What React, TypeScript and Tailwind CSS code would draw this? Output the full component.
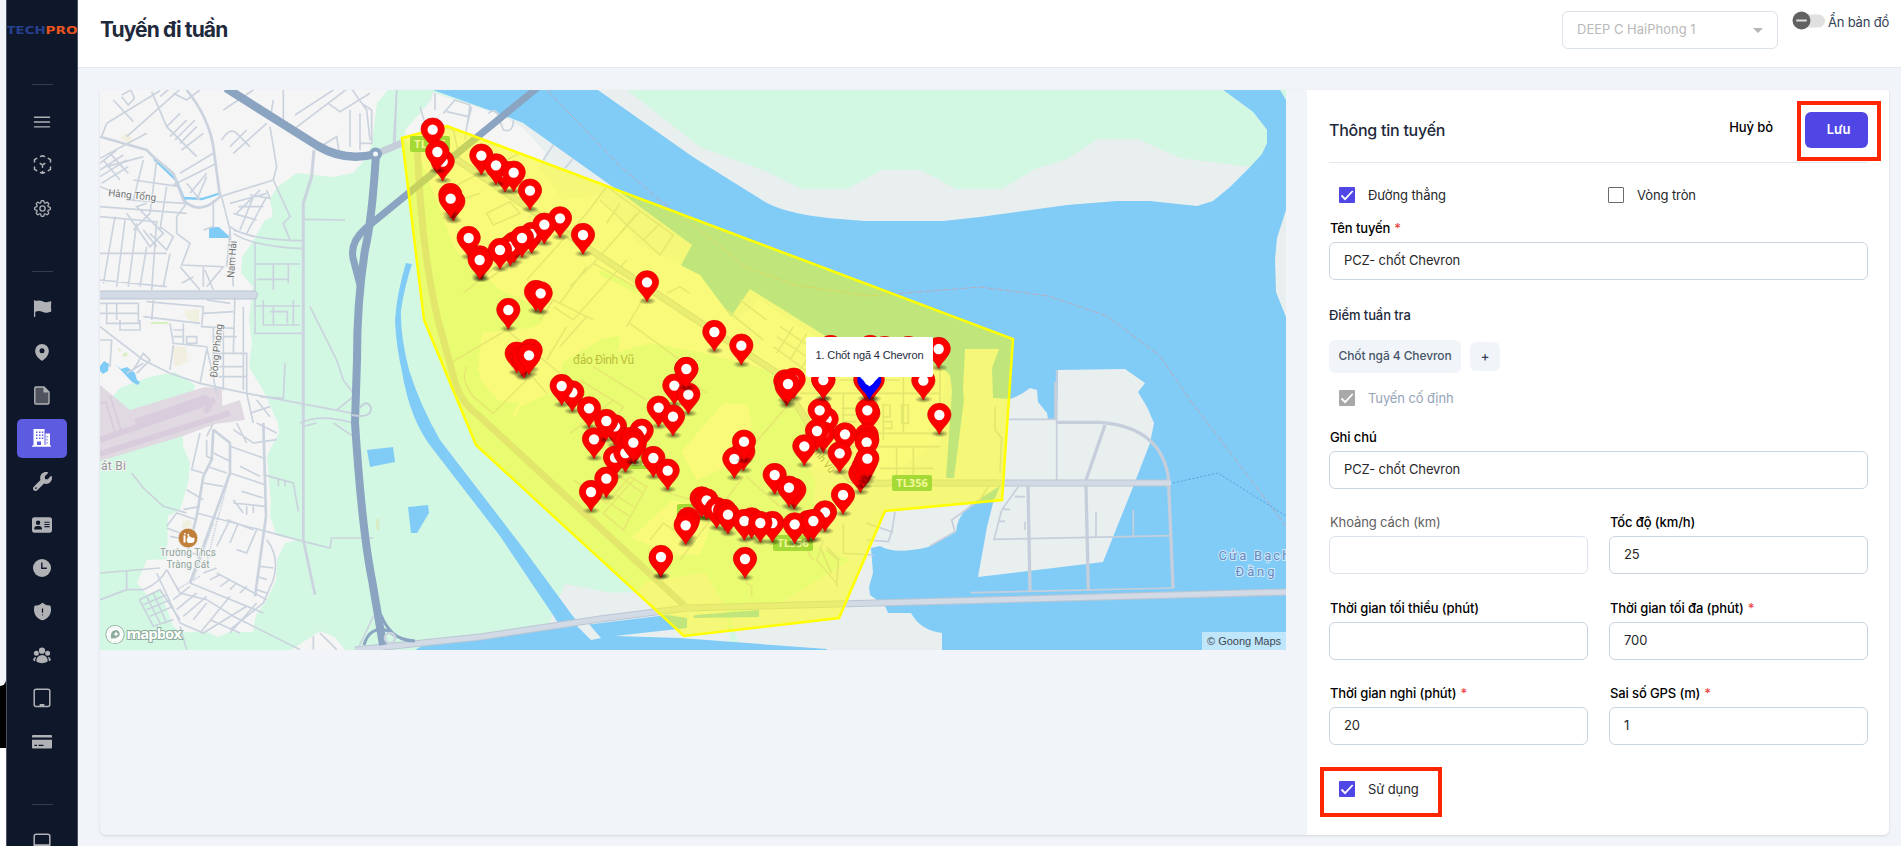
import type { ReactNode } from "react";
import { HiMapPin, HiShieldExclamation, HiUserGroup, HiFlag, HiBars3, HiOutlineCog8Tooth } from "react-icons/hi2";
import { FaWrench, FaAddressCard } from "react-icons/fa6";

type Point = [number, number];

/* ---------- Sidebar ---------- */

const FileIcon = () => (
  <svg width="16" height="19" viewBox="0 0 16 19">
    <path d="M2 1h8l5 5v10.500a1.500 1.500 0 0 1-1.500 1.500h-11.500a1.200 1.200 0 0 1-1.200-1.200v-14.500a1.300 1.300 0 0 1 1.200-1.300z" fill="#4f535e" stroke="#b1b2b6" strokeWidth="1.400" />
    <path d="M9.500 1l5.500 5.500h-5.500z" fill="#b1b2b6" />
  </svg>
);

const BuildingIcon = () => (
  <svg width="20" height="18" viewBox="0 0 20 18">
    <path fill="#fff" fillRule="evenodd" d="M1.500 0h11v16h1v-11.500h4.500v12h1v1.300h-19v-1.300h1.500zM4 2.500v1.500h1.500v-1.500zm3 0v1.500h1.500v-1.500zm2.800 0v1.500h1.500v-1.500zm-5.800 3v1.500h1.500v-1.500zm3 0v1.500h1.500v-1.500zm2.800 0v1.500h1.500v-1.500zm-5.800 3v1.500h1.500v-1.500zm3 0v1.500h1.500v-1.500zm2.800 0v1.500h1.500v-1.500zm-4.800 4v3.500h4v-3.500zm9.500-5.500v1.500h1v-1.500zm0 3v1.500h1v-1.500zm0 3v1.500h1v-1.500z" />
  </svg>
);

const ClockIcon = () => (
  <svg width="18" height="18" viewBox="0 0 18 18">
    <circle cx="9" cy="9" r="9" fill="#b1b2b6" />
    <path d="M8.800 3.500v5.700h5" fill="none" stroke="#0f172a" strokeWidth="1.400" />
  </svg>
);

const TabletIcon = () => (
  <svg width="18" height="20" viewBox="0 0 18 20">
    <rect x="1.200" y="1.200" width="15.600" height="17.400" rx="2" fill="none" stroke="#b1b2b6" strokeWidth="1.500" />
    <rect x="6.500" y="16" width="5" height="2" rx=".8" fill="#b1b2b6" />
  </svg>
);

const LaptopIcon = () => (
  <svg width="18" height="16" viewBox="0 0 18 16">
    <rect x="1.200" y="1.200" width="15.600" height="14" rx="2" fill="none" stroke="#b1b2b6" strokeWidth="1.500" />
    <path d="M1 11.200h16v4h-16z" fill="#b1b2b6" />
  </svg>
);

const CardIcon = () => (
  <svg width="20" height="14" viewBox="0 0 20 14">
    <path fill="#b1b2b6" fillRule="evenodd" d="M1 0h18a1 1 0 0 1 1 1v1.500h-20v-1.500a1 1 0 0 1 1-1zM0 4.800h20v7.700a1 1 0 0 1-1 1h-18a1 1 0 0 1-1-1zM2.500 9.700v1.200h2.500v-1.200zm4 0v1.200h5v-1.200z" />
  </svg>
);

const ScanIcon = () => (
  <svg width="19" height="19" viewBox="0 0 19 19" fill="none" stroke="#b1b2b6" strokeWidth="1.500" strokeLinecap="round" strokeLinejoin="round">
    <path d="M7.500 1.500l2-.8 2 .8M3.700 3.400l-2.200 1.300v2.300M15.300 3.400l2.200 1.300v2.300M1.500 12v2.300l2.200 1.300M17.500 12v2.300l-2.200 1.300M7.500 17.500l2 .8 2-.8M9.500 16.500v1.700M7.200 8.500l2.300 1.300 2.300-1.300M9.500 9.800v2.400" />
  </svg>
);

const NavItem = ({ active, children }: { active?: boolean; children: ReactNode }) => (
  <div className="flex h-[43.3px] w-full shrink-0 items-center justify-center">
    <div className={active ? "flex h-[39px] w-[50px] items-center justify-center rounded-[5px] bg-[#5d5be0]" : "flex items-center justify-center text-[#b1b2b6]"}>
      {children}
    </div>
  </div>
);

const Divider = () => <div className="h-px w-[21px] shrink-0 bg-[#343c4d]" />;

const Sidebar = () => (
  <aside className="flex h-full w-[72px] shrink-0 flex-col items-center overflow-hidden border-x border-[#4a5160] bg-[#0f172a]">
    <div className="flex h-[84px] w-full shrink-0 items-start pt-[25px]">
      <svg width="70" height="11" viewBox="0 0 70 11" className="font-['DejaVu_Sans'] text-[11px] font-bold">
        <text x="-0.500" y="9" textLength="39" lengthAdjust="spacingAndGlyphs" fill="#26418f">TECH</text>
        <text x="38.500" y="9" textLength="32" lengthAdjust="spacingAndGlyphs" fill="#e8551f">PRO</text>
      </svg>
    </div>
    <Divider />
    <div className="mt-[15px] flex w-full flex-col">
      <NavItem><HiBars3 className="h-[22px] w-[22px]" /></NavItem>
      <NavItem><ScanIcon /></NavItem>
      <NavItem><HiOutlineCog8Tooth className="h-[21px] w-[21px]" /></NavItem>
    </div>
    <div className="mt-[41px]"><Divider /></div>
    <div className="mt-[15px] flex w-full flex-col">
      <NavItem><HiFlag className="h-[21px] w-[21px]" /></NavItem>
      <NavItem><HiMapPin className="h-[20px] w-[20px]" /></NavItem>
      <NavItem><FileIcon /></NavItem>
      <NavItem active><BuildingIcon /></NavItem>
      <NavItem><FaWrench className="h-[19px] w-[19px]" /></NavItem>
      <NavItem><FaAddressCard className="h-[18px] w-[20px]" /></NavItem>
      <NavItem><ClockIcon /></NavItem>
      <NavItem><HiShieldExclamation className="h-[21px] w-[21px]" /></NavItem>
      <NavItem><HiUserGroup className="h-[20px] w-[20px]" /></NavItem>
      <NavItem><TabletIcon /></NavItem>
      <NavItem><CardIcon /></NavItem>
    </div>
    <div className="mt-[41px]"><Divider /></div>
    <div className="mt-[28px]"><LaptopIcon /></div>
  </aside>
);

/* ---------- Map ---------- */

const zone = "402,138 447,126 1013,339 1002,500 885,511 839,618 684,636 476,445 424,320";

const westPins: Point[] = [
  [158, 149], [188, 245], [172, 216], [304, 227], [375, 278], [348, 256], [401, 278], [450, 332],
  [220, 365], [211, 345], [212, 356], [266, 474], [304, 540], [299, 532], [299, 540], [540, 415], [455, 462],
  [403, 490], [391, 500], [493, 434], [426, 474], [360, 510], [609, 465], [801, 607], [468, 636],
  [482, 640], [385, 690], [410, 821], [452, 812], [426, 830], [432, 836], [447, 826], [1003, 756],
  [1084, 797], [883, 917], [919, 867],
];

const southPins: Point[] = [
  [577, 97], [545, 78], [627, 145], [642, 238], [705, 199], [679, 183], [785, 212], [740, 238],
  [758, 236], [705, 293], [736, 279], [764, 254], [760, 248], [820, 294], [863, 332], [633, 396], [679, 356],
  [925, 104], [836, 143], [879, 170], [1090, 275], [1063, 297], [1092, 245], [1216, 64],
  [1241, 59], [1220, 80], [1224, 72], [1330, 60], [1340, 178], [1330, 220], [1319, 151], [1311, 213], [1273, 259],
  [1184, 345], [1243, 390], [1227, 383], [965, 415], [980, 421], [1010, 447], [1035, 453], [1044, 464],
  [925, 477], [922, 487], [917, 496], [842, 594], [843, 591], [1095, 597], [1115, 478], [1093, 483], [1177, 489], [1141, 489],
  [1335, 457], [1285, 486], [1244, 493], [1300, 483],
];

const eastPins: Point[] = [
  [70, 60], [196, 60], [218, 60], [209, 70], [205, 160], [202, 151], [200, 226], [202, 240], [200, 247], [181, 340],
  [190, 322], [197, 308], [202, 296], [135, 223], [119, 280], [370, 62], [418, 165], [129, 405],
  [416, -33], [92, -39], [211, -39], [254, -36], [325, -36],
];

const Pin = ({ x, y, color = "#fe0000", edge = "#d80000" }: { x: number; y: number; color?: string; edge?: string }) => (
  <g transform={`translate(${x} ${y})`}>
    <ellipse cx="1" cy="56" rx="27" ry="11" fill="url(#pinShadow)" />
    <path d="M0 58C-6 40-35 22-35-1A35 34 0 0 1 35-1C35 22 6 40 0 58Z" fill={color} stroke={edge} strokeWidth="2" />
    <circle r="15.500" fill="#fff" />
  </g>
);

const Badge = ({ x, y, label }: { x: number; y: number; label: string }) => (
  <g>
    <rect x={x} y={y} width="40" height="16" rx="2" fill="#a4d936" />
    <text x={x + 20} y={y + 12} textAnchor="middle" className="font-['Open_Sans'] text-[11px] font-bold" fill="#f5f99b">{label}</text>
  </g>
);

const GuardMap = () => (
  <svg width="1186" height="560" viewBox="100 90 1186 560" className="block shrink-0">
    <defs>
      <radialGradient id="pinShadow">
        <stop offset="0" stopColor="#000" stopOpacity=".55" />
        <stop offset="1" stopColor="#000" stopOpacity="0" />
      </radialGradient>
    </defs>
    <rect x="100" y="90" width="1186" height="560" fill="#d2f7e2" />

    {/* settled areas */}
    <path fill="#f5f5f5" d="M100 90H388L377 103 372 143 368 156 353 173 333 177 297 173 277 187 270 200 273 217 265 220 252 243 242 257 241 273 253 287 249 320 252 343 249 367 263 390 278 423 279 432 267 456 271 503 270 516 277 536 297 540 285 543 277 560 276 580 267 600 256 615 253 632H230L218 637 207 632H180L173 626 160 590 147 595 137 583 147 560 167 559 168 516 180 510 188 483 190 463 183 446V436L195 385 175 372 150 377 120 388 113 396 100 400Z" />
    <path fill="#f5f5f5" d="M291 650L320 631 335 637 345 650Z" />
    <path fill="#e0d9e1" d="M100 385L112 395 130 410 205 387 222 388V406L240 400 245 420 215 424 183 436 100 461Z" />
    <path fill="none" stroke="#d9cddd" strokeWidth="6" d="M100 454L230 413M135 422L205 398Q215 402 205 412M100 440L215 400" />
    <path fill="none" stroke="#d9cddd" strokeWidth="2" d="M100 404L106 402 116 436M110 396L122 433" />
    <path fill="#f1efe0" d="M120 138l6-5 7 6-3 5zM185 310l14-1v14h-6l-8-7zM172 346l14 1 2 15-14 5zM182 522l8-3 2 7-10 3z" />
    <path fill="#d8f0c0" d="M151 322h18l-1 2h-17zM117 347l4 3-1 2zM122 355l4-3 2 2-3 3z" />
    <path fill="#d9ecc6" d="M376 519l3 0 1 11-2 1-2-4zM393 525l14-2v6l-14 1zM399 511l6-2v2l-6 2z" />

    {/* sea and rivers */}
    <path fill="#81ccf7" d="M433 90H1286V650H870L780 400 700 297 600 200 523 123 497 113Z" />
    <path fill="#e9efef" d="M598 90L693 157 767 203Q790 215 840 219L865 221H943L980 217 1067 205 1117 201H1150L1197 206 1213 201 1230 187 1250 167 1267 143V130L1253 112 1223 90Z" />
    <path fill="#d2f7e2" d="M627 90L700 147 763 170 801 189H847L882 170H921L956 189H1002L1035 169 1067 159 1098 139H1138L1180 158 1250 167 1262 154 1267 143V130L1253 112 1223 90Z" />
    <path fill="#d2f7e2" d="M1280 90h6v10z" />
    <path fill="#e9efef" d="M1286 210L1277 238 1275 260 1276 292 1286 317Z" />

    {/* island */}
    <path fill="#e9efef" d="M433 92L497 113 523 123 613 187 692 245 680 267Q682 283 697 297L730 318 750 289 827 337 880 362 940 366 950 375 952 390 946 478H954L964 400 963 390 965 349H999L992 368 993 398 1010 399Q1020 396 1030 388L1037 390 1038 402 1047 413 1048 419H1057L1058 370 1125 369 1145 383 1138 392 1147 407 1154 423 1150 443 1133 487 1113 537 1103 562 978 577 987 527 993 503 1000 486 973 503Q957 515 956 532L928 547Q895 555 880 546L871 548 873 573 869 587 870 595 877 600 885 606 888 613H911Q920 630 942 633V650H538L565 584 500 400 402 138 430 100Z" />
    <path fill="#f5f5f5" d="M433 93L500 115 523 128 545 152 540 168 562 200 600 195 640 245 700 275 735 322 760 300 820 340 860 365 930 367 944 376 940 440 905 465 900 480 850 480 800 460 770 380 650 360 530 400 470 400 420 250 405 130 432 100Z" />
    <path fill="#d2f7e2" d="M403 138L418 152 455 250 500 290 545 310Q545 325 530 328L482 333 478 370Q500 410 530 400L560 385 563 362 600 340 620 335 618 352 650 343 700 352 775 372 812 420 802 455 815 480 812 545 850 560 785 600 730 618 741 650 731 650 727 610 705 572 645 582 637 592 613 593 565 584 538 623 380 640 380 200Z" />
    <path fill="#d2f7e2" d="M600 270L612 275 640 290 635 292 600 275z" />
    <path fill="#f5f5f5" d="M482 332L545 355 560 372 555 390 520 407 516 417 512 414 520 403 498 400 480 380zM723 403L748 405 752 425 738 462 697 480 681 452zM631 538L672 500 690 505 715 515 700 555 665 555 650 545z" />
    <path fill="#81ccf7" d="M427 643L560 628 667 615 687 618V628L615 636 680 638 827 649V650H415ZM695 615L759 610V617L693 618Z" />
    <path fill="#81ccf7" d="M406 263Q397 292 395 320 396 345 402 372 410 420 432 448L500 536 553 615 575 650H602L572 615 520 544 440 440Q420 405 409 370 400 335 401 310 405 285 412 264Z" />
    <path fill="#81ccf7" d="M367 450l26-3 2 15-25 5zM408 507l20-2 1 8-12 20h-6zM209 227h10l12 11h-22zM100 366l4-5 5 3-1 7-5 3-3-3zM116 365l5 4 6-2 8 6 2 7 3 2-2 3-6-3z" />
    <path fill="none" stroke="#81ccf7" strokeWidth="2.300" d="M154 159L176 180 185 201M184 198L202 199 221 193" />
    <path fill="#e9efef" d="M575 624l14 0 12 14-10 2z" />

    {/* minor streets */}
    <g fill="none" stroke="#cbd3de" strokeWidth="5" transform="scale(.33333)">
      <path d="M300 410L440 450 460 470 520 520 550 600Q600 650 660 590L640 440Q625 350 560 270" strokeWidth="8" />
      <path d="M305 410L320 370 480 272M340 300L400 365M365 290l20 25 18-20-10-25-28 15M480 290l30-25M455 275L500 380 590 470M540 268L380 410M300 475L440 400M320 500L430 470M600 270L560 300 520 280M510 410l50-50M525 420l60-60M540 430l50-50M500 380l40-40M610 400L545 450M520 555L650 490M540 520L640 460" />
      <path d="M300 490L350 450M300 510L370 465M300 530L380 480M305 550L385 500M330 460L385 520M310 480L360 540M300 560L340 575" />
      <path d="M430 480L400 600M470 480L450 640M500 560L480 690M400 540L540 560M380 600L560 610M560 610L530 650 530 700 570 730 545 795 670 800 620 860" />
      <path d="M640 600V680L610 690M665 590L690 690 700 860M660 590L820 540M690 610L800 580M710 640L780 570M720 690L760 590M740 700L800 590M700 640L770 660M715 620L790 620M700 690L760 710M800 570l10 25-60-10M600 600l-40-50M570 580l50-60M590 600l30-70" />
      <path d="M300 650L470 665 455 870M345 650L310 850M375 660L350 860M410 670L385 860M440 740L420 860M510 760L490 860M300 760H500M300 840L500 860M300 620L560 640M380 640L450 740 490 700 410 620 440 610M450 700l50 50 20-40-40-30M430 690l40 50M400 690l50-50" />
      <path d="M540 800L600 870M545 850l35-20M610 860V800M690 690L680 800M705 880L700 1060 740 1060V1180M730 920V1170M300 910H415V970H320V910M300 940H415M350 910V960M460 900L455 960M300 980L430 1080 510 1120 600 1150 740 1180 1060 1240M430 950L600 970M360 960V990H420V960M510 970L520 1030 620 1040 650 1180M550 970V1035M520 990H550M520 1010H550M440 905L610 920 605 980 700 985M560 1010h30v20h-30zM620 900L690 910M610 940L700 935M640 980V1100M670 990V1170M640 1010H710M640 1060H700M640 1100H730M650 1130H740M600 1150L620 1050M510 1110L520 1035M640 870l-25-60M300 1020H335L330 1100M400 1110L430 1060 450 1080 410 1120M380 1120L430 1090" />
      <path d="M850 268V360M810 360L820 300M885 345L1000 270M885 385L1050 260 1100 330 1110 420M985 310L1020 335 1110 280M1050 330V440M1080 340V450M1085 310l30 20V430h-35M670 330L760 270M665 420Q690 380 710 400L750 440M690 440L740 390M700 460L800 370M960 440L1010 410 1018 460M810 380L830 500 820 540 870 650 850 670 870 720M1190 270L1180 440" />
      <path d="M690 680Q740 720 910 722M700 700Q760 740 910 746M765 730V1000H910M765 792H900M820 792V870M865 792V850M770 838H865M765 918H900M790 900V975H900M810 935H862V970M880 900V975M820 918V975M930 920L1010 1080 1030 1140 1060 1180M915 658L1035 660M1010 1230L1060 1190M740 1180L760 1269M780 1190L850 1195 855 1090M750 1240l60-20M770 1200l40 50M900 1269Q960 1240 1060 1269" />
      <path d="M942 450L935 530 910 610V1269" strokeWidth="9" />
    </g>
    <g fill="none" stroke="#cbd3de" strokeWidth="5" transform="translate(0 423) scale(.33333)">
      <path d="M910 0V350L945 515M790 0L798 280 765 520M640 20L690 60V150L570 480M640 20L635 110 610 160 590 280 560 400" strokeWidth="8" />
      <path d="M590 270L910 355M690 150L795 185M650 450L800 530M570 480L790 570M500 440L540 510 620 530 700 580 900 680M800 350Q840 400 820 470L790 540 690 620M540 600L610 630 740 550M470 450L540 600M600 630L690 520M690 630L770 540M630 590L720 630M430 500Q480 480 500 440M300 530L380 500H430M300 450L480 435M380 445V500M300 530L370 505" />
      <path d="M600 30L575 140 610 150M620 50V100L640 110M690 70L790 105M700 20L760 60 830 50M710 0L740 60M770 0L830 30M640 90L690 115M620 130L680 150M610 180L670 190M560 200L610 230M550 260L600 250M500 310L530 270 590 290M500 315L540 330M510 340L560 350M570 390L640 400M690 290L650 370M715 300L690 360M680 290L760 320M770 320L740 390L710 380M720 130l60 30M700 240L795 250M725 205L790 225M700 230l30 40M740 250v25M760 250v20M790 155L880 180 895 265M835 190V170M855 190V175M395 150L430 195 490 250 560 270" />
      <path d="M418 530L480 500 540 590M418 530L460 610 520 590M430 545L500 515M440 560L510 530M450 580L520 550M440 520L480 600M460 510L500 600M520 530L570 490M530 560L590 510M550 580L620 520M580 590L620 540M610 450l40-15M630 470l30-15M660 490l30-20M690 500l20-20M720 510l20-20M770 460l30 10M780 430l40 5M770 500l30 10M1120 345H995L990 375L910 355M640 0L620 40M540 610L560 680M960 630L1010 680M940 640V680M1120 580L1075 675M910 10L950 0M1000 0L1060 40" />
      <path d="M620 420L650 300 690 150M580 470L640 300M530 500L600 460" strokeDasharray="4 3" />
    </g>
    <g fill="none" stroke="#cbd3de" strokeWidth="5" transform="translate(380 80) scale(.33333)">
      <path d="M50 30L45 190M165 40V90M120 80L150 180M190 100L225 60 270 75 255 180M200 95L265 110M185 140L280 165M325 100Q350 80 355 110L370 150Q400 160 400 120M340 90l30 30M520 195L490 240M580 235L555 265M220 150L240 240M275 80L260 140" />
      <path d="M220 320L420 220M240 360L300 340M320 400L390 365 420 400 340 435zM260 500L340 530M250 640L540 400M320 600L500 480M440 600L620 400 680 320 880 465 840 525 660 360M780 395L640 550 570 620M720 370L680 430M770 400L720 460M790 480L840 430M540 670L620 560M480 720L520 660 640 720M520 680L580 720 740 540M540 800L620 710M560 740L500 840M210 850L380 750M380 750L540 880M640 550L800 640 740 740M750 730L900 840M860 640L900 620 930 640M1000 720L1080 820M1040 690L1150 780M1080 660L1160 720M1200 740l120 80M1190 770l120 80M1180 800l110 80M1240 740l-50 80M1280 760l-50 80M1310 790l-50 80" />
    </g>
    <g fill="none" stroke="#cbd3de" strokeWidth="5" transform="translate(380 360) scale(.33333)">
      <path d="M260 20Q240 60 280 110L340 160 440 60M440 30L500 100M600 60L730 140 640 260M640 20L800 120M570 220L700 120M580 360L680 430 750 350 800 380 730 510 670 460 760 360M720 350l70 50M700 400l60 40M690 430l60 40M1090 350L900 600M810 540L850 490 900 520M980 100L900 40M1100 350L1200 440M1220 140L1090 290M1000 440L870 400 850 380M1100 540V670L1115 680V710M1330 540L1310 600 1370 670M1340 560L1380 600M1260 540L1300 600" />
    </g>
    <g fill="none" stroke="#c6cedb" strokeWidth="5" transform="translate(800 360) scale(.33333)">
      <path d="M0 100H420M120 60H300M130 100V240M250 130V240M250 135H270V170H250zM305 135H325V190H305zM250 185H275V205H250zM120 220H420V0M120 260H420M290 260V350M340 260V360M240 325H400M125 145H170M125 165H170M125 185H170M310 0V220M170 60H300M130 490V580L220 585M200 490L275 515 265 545 200 540M285 455L275 520M60 560L95 640M80 570L115 600 110 680" />
      <path d="M585 140V210L605 235 600 340M625 178H765V65M770 30V360M655 380L605 450 582 538 1115 527M645 410H675M610 448H630M595 484H615M675 510V485M888 455V530M1000 450V527M512 698L1120 684M565 380L540 420 455 480 465 515 390 558" />
      <path d="M684 378L690 692M858 378L865 692M858 360L915 195M770 187H900Q1080 200 1105 350L1119 684" strokeWidth="10" />
    </g>

    {/* arterial roads */}
    <g fill="none" strokeLinejoin="round">
      <path d="M376 154L402 143M417 140Q421 250 438 320L454 378Q460 402 478 415L687 608" stroke="#c5ced9" strokeWidth="7" />
      <path d="M450 155L583 245 780 375Q815 440 850 479Q860 484 890 483H1171M355 650L480 637 600 619 687 608 1286 592" stroke="#bcc6d4" strokeWidth="7" />
      <path d="M450 155L583 245 780 375Q815 440 850 479Q860 484 890 483H1171M355 650L480 637 600 619 687 608 1286 592" stroke="#d2dae5" strokeWidth="5" />
      <path d="M98 295H253.500" stroke="#bcc5d2" strokeWidth="9" strokeLinecap="round" />
      <path d="M98 295H253.500" stroke="#d2dae5" strokeWidth="7" strokeLinecap="round" />
      <path d="M537 88L366 228Q350 242 353 258L360 285" stroke="#8aa4c1" strokeWidth="7" />
      <path d="M226 88L318 146Q345 162 376 154" stroke="#8aa4c1" strokeWidth="8.500" />
      <path d="M376 154Q372 220 365 250Q357 300 357 360L355 423Q362 530 372 580L383 645" stroke="#8aa4c1" strokeWidth="8" />
      <path d="M364 645Q370 625 388 631 400 640 415 641M381 615Q390 638 410 641" stroke="#8aa4c1" strokeWidth="3" />
      <circle cx="375.500" cy="154" r="4.500" stroke="#8aa4c1" strokeWidth="4" fill="#f0f5f5" />
      <circle cx="390" cy="638" r="5" stroke="#cbd3de" strokeWidth="2.500" />
      <circle cx="687" cy="608" r="3.500" stroke="#d2dae5" strokeWidth="2" />
      <path d="M352 415Q372 419 371 407Q366 399 360 408" stroke="#c6cedb" strokeWidth="1.800" />
    </g>

    {/* boundaries */}
    <path fill="none" stroke="#b6abc0" strokeWidth="1" strokeDasharray="7 2" d="M547 90L620 166 662 202 700 230 745 267 795 285 868 296 980 287 1048 296 1107 316 1160 356 1190 400 1286 526" />
    <path fill="none" stroke="#4da3dc" strokeWidth="1" strokeDasharray="2 2" d="M1173 483L1218 473 1286 516" />

    {/* place names */}
    <g className="font-['Roboto'] text-[10px]" fill="#707374" stroke="#f5f5f5" strokeWidth="2" paintOrder="stroke">
      <text x="108" y="196" transform="rotate(6 108 196)" textLength="48">Hàng Tổng</text>
      <text x="234" y="278" transform="rotate(-86 234 278)" textLength="37">Nam Hải</text>
      <text x="217" y="378" transform="rotate(-84 217 378)" textLength="54">Đồng Phong</text>
      <text x="101" y="470" textLength="25" className="text-[12px]" fill="#96999a">át Bi</text>
      <text x="160" y="555.500" textLength="56" fill="#8fa39b">Trường Thcs</text>
      <text x="166.500" y="567.500" textLength="43" fill="#8fa39b">Tràng Cát</text>
    </g>
    <circle cx="188" cy="538" r="9.800" fill="#c0803c" stroke="#f5f5f5" strokeWidth=".6" />
    <path fill="#fff" d="M184 533h1.500v1.500h-1.500zM183.500 535.500h2v7h-2zM187 538q3-3 5 0 3-1.500 2.500 2 0 3-3.500 3h-3q-2-2-1-5z" />
    <path stroke="#fff" strokeWidth="1.500" d="M188 534l1 4" />
    <g className="font-['Roboto'] text-[13px]" fill="#6488c0" stroke="#cfe8fb" strokeWidth="2" paintOrder="stroke">
      <text x="1218.500" y="559.500" textLength="71">Cửa Bạch</text>
      <text x="1235.500" y="575.500" textLength="39">Đằng</text>
    </g>
    <g fill="#77797b" className="font-['Roboto']">
      <text x="573" y="364" textLength="61" className="text-[12px]">đảo Đình Vũ</text>
      <text x="813" y="452" transform="rotate(52 813 452)" className="text-[10px]">inh Vũ</text>
    </g>

    {/* patrol zone */}
    <polygon points={zone} fill="#ffff00" fillOpacity=".5" stroke="#ffff00" strokeWidth="2.500" />
    <Badge x={410} y={136} label="TL356" />
    <Badge x={892} y={475} label="TL356" />
    <Badge x={773} y={535} label="TL356" />
    <Badge x={677} y={504} label="TL356" />
    <Badge x={618} y={453} label="TL356" />

    {/* checkpoints */}
    <g transform="translate(380 80) scale(.33333)">
      {westPins.map(([x, y], i) => <Pin key={i} x={x} y={y} />)}
    </g>
    <g transform="translate(380 360) scale(.33333)">
      {southPins.map(([x, y], i) => <Pin key={i} x={x} y={y} />)}
      <Pin x={919} y={27} />
    </g>
    <g transform="translate(800 360) scale(.33333)">
      {eastPins.map(([x, y], i) => <Pin key={i} x={x} y={y} />)}
      <Pin x={208} y={60} color="#0000ff" edge="#0000d8" />
    </g>

    {/* popup */}
    <path d="M808 337H931a2 2 0 0 1 2 2V375a2 2 0 0 1-2 2H879L869.500 386.500 860 377H808a2 2 0 0 1-2-2V339a2 2 0 0 1 2-2Z" fill="#fff" />
    <text x="815.500" y="359" textLength="108" className="font-['Liberation_Sans'] text-[11px]" fill="#1e293b">1. Chốt ngã 4 Chevron</text>

    {/* attribution */}
    <rect x="1202" y="632" width="84" height="18" fill="#fff" fillOpacity=".5" />
    <text x="1207" y="645" textLength="74" className="font-['Liberation_Sans'] text-[11px]" fill="#404952">© Goong Maps</text>
    <circle cx="115" cy="634.500" r="8" fill="none" stroke="#8cac9b" strokeWidth="3.200" />
    <circle cx="115" cy="634.500" r="7.800" fill="#8cac9b" stroke="#fff" strokeWidth="1.800" />
    <circle cx="115" cy="634.500" r="7" fill="#fff" />
    <path d="M111 638.500Q110 632 114 630.500Q117 629 119 631.500Q121 635 118 637Q115 639 111 638.500Z" fill="#8cac9b" />
    <path d="M116 631.500l1 1.700 1.800.8-1.800.8-1 1.700-.9-1.700-1.800-.8 1.800-.8z" fill="#fff" />
    <text x="126.500" y="638.500" textLength="55.500" className="font-['Open_Sans'] text-[15px] font-bold" fill="#fff" stroke="#8cac9b" strokeWidth="2" paintOrder="stroke">mapbox</text>
  </svg>
);

/* ---------- Form ---------- */

const Check = ({ state, label }: { state: "on" | "off" | "disabled"; label: string }) => {
  const box =
    state === "on" ? "bg-[#4f46e5]" : state === "disabled" ? "bg-[#a8a8a8]" : "border border-[#6b6b6b] bg-white";
  return (
    <div className="flex h-4 items-center pl-[10px]">
      <span className={"flex h-4 w-4 shrink-0 items-center justify-center rounded-[1px] " + box}>
        {state !== "off" && (
          <svg width="14" height="14" viewBox="0 0 14 14" fill="none" stroke="#fff" strokeWidth="1.800">
            <path d="M1.500 7.500l3.600 3.600L12.700 3" />
          </svg>
        )}
      </span>
      <span className={"ml-[13px] whitespace-nowrap text-[13px] leading-4 tracking-[-0.1px] " + (state === "disabled" ? "text-[#94a3b8]" : "text-[#27272a]")}>{label}</span>
    </div>
  );
};

const Field = ({ label, value = "", required, disabled }: { label: string; value?: string; required?: boolean; disabled?: boolean }) => (
  <div className="flex min-w-0 flex-1 flex-col">
    <div className={"ml-px h-[18px] whitespace-nowrap text-[13px] leading-[17px] tracking-[-0.12px] " + (disabled ? "text-[#5f5f5f]" : "font-medium text-black")}>
      {label}
      {required && <span className="ml-1 text-[#ef4444]">*</span>}
    </div>
    <div className={"mt-1 flex h-[38px] items-center rounded-[6px] border bg-white px-[14px] text-[13px] tracking-[-0.1px] text-[#27272a] " + (disabled ? "border-[#dbe2ec]" : "border-[#cbd5e1]")}>
      {value}
    </div>
  </div>
);

const RoutePanel = () => (
  <section className="relative flex w-[582px] shrink-0 flex-col bg-white pl-[22px] pr-[21px]">
    <div className="flex h-[73px] shrink-0 items-center border-b border-[#e2e8f0] pt-[7px]">
      <h2 className="text-[16px] font-medium leading-6 tracking-[-0.25px] text-[#1e293b]">Thông tin tuyến</h2>
      <button className="ml-auto mr-8 -mt-1 text-[13px] font-medium tracking-[-0.1px] text-black">Huỷ bỏ</button>
      <button className="h-9 w-[63px] rounded-[6px] bg-[#4f46e5] pl-1 text-[13px] font-semibold text-white">Lưu</button>
    </div>
    <div className="mt-6 grid grid-cols-[269px_1fr]">
      <Check state="on" label="Đường thẳng" />
      <Check state="off" label="Vòng tròn" />
    </div>
    <div className="mt-[17px] flex"><Field label="Tên tuyến" value="PCZ- chốt Chevron" required /></div>
    <div className="mt-[27px] h-[18px] text-[13px] font-medium leading-[17px] tracking-[-0.1px] text-[#1e293b]">Điểm tuần tra</div>
    <div className="mt-[15px] flex items-center gap-[9px]">
      <span className="flex h-[33px] w-[132px] items-center justify-center rounded-[6px] bg-[#f1f5f9] pb-px text-[12px] font-medium tracking-[-0.1px] text-[#475569]">Chốt ngã 4 Chevron</span>
      <span className="flex h-[29px] w-[30px] items-center justify-center rounded-[6px] bg-[#f1f5f9] text-[13px] font-medium text-[#334155]">+</span>
    </div>
    <div className="mt-[17px]"><Check state="disabled" label="Tuyến cố định" /></div>
    <div className="mt-[23px] flex"><Field label="Ghi chú" value="PCZ- chốt Chevron" /></div>
    <div className="mt-[25px] flex gap-[21px]">
      <Field label="Khoảng cách (km)" disabled />
      <Field label="Tốc độ (km/h)" value="25" />
    </div>
    <div className="mt-[26px] flex gap-[21px]">
      <Field label="Thời gian tối thiểu (phút)" />
      <Field label="Thời gian tối đa (phút)" value="700" required />
    </div>
    <div className="mt-[25px] flex gap-[21px]">
      <Field label="Thời gian nghỉ (phút)" value="20" required />
      <Field label="Sai số GPS (m)" value="1" required />
    </div>
    <div className="mt-9"><Check state="on" label="Sử dụng" /></div>
    <div className="absolute left-[490px] top-[11px] h-[60px] w-[84px] border-4 border-[#ff2600]" />
    <div className="absolute left-[13px] top-[677px] h-[50px] w-[122px] border-4 border-[#ff2600]" />
  </section>
);

const Header = () => (
  <header className="flex h-[68px] shrink-0 items-start border-b border-[#e2e8f0] bg-white pl-[22px] pr-[12px]">
    <h1 className="mt-[15px] text-[21px] font-bold leading-[30px] tracking-[-0.9px] text-[#1e293b]">Tuyến đi tuần</h1>
    <div className="ml-auto mt-[11px] flex h-[38px] w-[216px] items-center rounded-[6px] border border-[#dbe2ea] pl-[14px] pr-[14px] text-[13px] text-[#b9b9b9]">
      <span>DEEP C HaiPhong 1</span>
      <svg className="ml-auto" width="10" height="5" viewBox="0 0 10 5"><path d="M0 0h10L5 5z" fill="#b5b5b5" /></svg>
    </div>
    <div className="ml-[14px] mt-3 flex h-[18px] items-center">
      <svg width="33" height="20" viewBox="0 0 33 20">
        <rect x="4" y="3.500" width="29" height="13" rx="6.500" fill="#e0e0e0" />
        <circle cx="9.500" cy="9.500" r="9" fill="#616161" />
        <rect x="4" y="8.500" width="11" height="2" rx="1" fill="#e0e0e0" />
      </svg>
      <span className="ml-[3px] mt-[3px] whitespace-nowrap text-[13px] tracking-[-0.2px] text-[#334155]">Ẩn bản đồ</span>
    </div>
  </header>
);

export default function App() {
  return (
    <div className="flex h-[846px] w-[1901px] overflow-hidden bg-[#f1f5f9] font-['Inter',sans-serif]">
      <div className="flex w-[6px] shrink-0 flex-col bg-black">
        <div className="h-[686px] rounded-br-[6px] bg-[#f1f5f9]" />
        <div className="mt-[62px] flex-1 bg-white" />
      </div>
      <Sidebar />
      <div className="flex min-w-0 flex-1 flex-col">
        <Header />
        <main className="flex flex-1 pb-[11px] pl-[22px] pr-[12px] pt-[22px]">
          <div className="flex w-full justify-between overflow-hidden rounded-b-[6px] bg-[#f1f5f9] shadow">
            <GuardMap />
            <RoutePanel />
          </div>
        </main>
      </div>
    </div>
  );
}
